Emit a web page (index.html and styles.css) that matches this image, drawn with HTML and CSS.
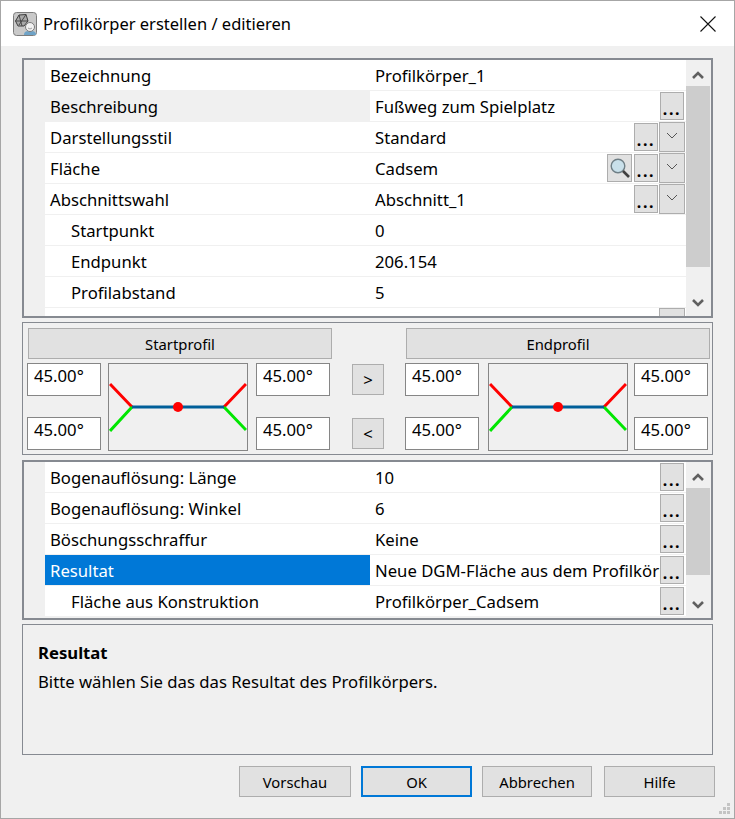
FILE: index.html
```html
<!DOCTYPE html>
<html lang="de">
<head>
<meta charset="utf-8">
<title>Profilkörper erstellen / editieren</title>
<link rel="stylesheet" href="styles.css">
</head>
<body>
<div class="window">
  <header class="titlebar">
    <svg class="app-icon" width="24" height="24" viewBox="0 0 24 24">
      <rect x="0.5" y="0.5" width="23" height="23" rx="3" fill="#c9c9c9" stroke="#7c7c7c"/>
      <path d="M2.5 9 L6 3 L13 2.5 L15 9 L11 14 L5 14 Z" fill="#a9a9a9" stroke="#3f3f3f" stroke-width="1"/>
      <path d="M2.5 9 L15 9 M6 3 L9 14 M13 2.5 L6 13" stroke="#3f3f3f" stroke-width="0.9" fill="none"/>
      <path d="M11 23 C11 19.500 13 19 17 19 C21 19 23 19.500 23 23 Z" fill="#6fa3c7"/>
      <circle cx="17" cy="15" r="4.500" fill="#f2f2f2" stroke="#7a7a7a"/>
      <path d="M15 16 Q17 18 19 16" stroke="#7a7a7a" fill="none" stroke-width="0.7"/>
    </svg>
    <span class="title">Profilkörper erstellen / editieren</span>
    <svg class="close" width="16" height="16" viewBox="0 0 16 16"><path d="M0.5 0.5 L15.5 15.5 M15.5 0.5 L0.5 15.5" stroke="#111" stroke-width="1.1" fill="none"/></svg>
  </header>
  <main class="content">
    <section class="grid-panel grid-top">
      <div class="rows">
        <div class="row"><div class="name">Bezeichnung</div><div class="value"><span class="val-text">Profilkörper_1</span></div></div>
        <div class="row row-soft"><div class="name">Beschreibung</div><div class="value"><span class="val-text">Fußweg zum Spielplatz</span><span class="mini dots">...</span></div></div>
        <div class="row"><div class="name">Darstellungsstil</div><div class="value has-drop"><span class="val-text">Standard</span><span class="mini dots">...</span><span class="mini drop"><svg width="12" height="7" viewBox="0 0 12 7"><path d="M1 1 L6 6 L11 1" fill="none" stroke="#555"/></svg></span></div></div>
        <div class="row"><div class="name">Fläche</div><div class="value has-drop"><span class="val-text">Cadsem</span><span class="mini search"><svg width="22" height="22" viewBox="0 0 22 22"><circle cx="9" cy="9" r="6.8" fill="#c9e0ea" stroke="#6f7f86" stroke-width="1.4"/><path d="M14 14 L20 20" stroke="#3f3f3f" stroke-width="2.6"/></svg></span><span class="mini dots">...</span><span class="mini drop"><svg width="12" height="7" viewBox="0 0 12 7"><path d="M1 1 L6 6 L11 1" fill="none" stroke="#555"/></svg></span></div></div>
        <div class="row"><div class="name">Abschnittswahl</div><div class="value has-drop"><span class="val-text">Abschnitt_1</span><span class="mini dots">...</span><span class="mini drop"><svg width="12" height="7" viewBox="0 0 12 7"><path d="M1 1 L6 6 L11 1" fill="none" stroke="#555"/></svg></span></div></div>
        <div class="row"><div class="name sub">Startpunkt</div><div class="value"><span class="val-text">0</span></div></div>
        <div class="row"><div class="name sub">Endpunkt</div><div class="value"><span class="val-text">206.154</span></div></div>
        <div class="row"><div class="name sub">Profilabstand</div><div class="value"><span class="val-text">5</span></div></div>
        <div class="row"><div class="name"></div><div class="value has-drop"><span class="val-text"></span><span class="mini drop"></span></div></div>
      </div>
      <div class="scrollbar">
        <div class="arrow arrow-up"><svg width="12" height="10" viewBox="0 0 12 10"><path d="M1 8 L6 3 L11 8" fill="none" stroke="#606060" stroke-width="2.6"/></svg></div>
        <div class="thumb thumb-top"></div>
        <div class="track"></div>
        <div class="arrow"><svg width="12" height="10" viewBox="0 0 12 10"><path d="M1 2 L6 7 L11 2" fill="none" stroke="#606060" stroke-width="2.6"/></svg></div>
      </div>
    </section>

    <section class="profiles">
      <div class="profile">
        <button class="btn head">Startprofil</button>
        <div class="profile-body">
          <div class="angles"><div class="angle">45.00°</div><div class="angle">45.00°</div></div>
          <div class="preview">
            <svg width="138" height="86" viewBox="0 0 138 86">
              <path d="M1 20 L23 43 M137 20 L115 43" stroke="#ff0000" stroke-width="3" fill="none"/>
              <path d="M1 67 L23 43 M137 66 L115 43" stroke="#00e600" stroke-width="3" fill="none"/>
              <path d="M23 43 L115 43" stroke="#005f99" stroke-width="3" fill="none"/>
              <circle cx="69" cy="43" r="5" fill="#ff0000"/>
            </svg>
          </div>
          <div class="angles"><div class="angle">45.00°</div><div class="angle">45.00°</div></div>
        </div>
      </div>
      <div class="transfer">
        <button class="btn move">&gt;</button>
        <button class="btn move">&lt;</button>
      </div>
      <div class="profile profile-end">
        <button class="btn head">Endprofil</button>
        <div class="profile-body">
          <div class="angles"><div class="angle">45.00°</div><div class="angle">45.00°</div></div>
          <div class="preview">
            <svg width="138" height="86" viewBox="0 0 138 86">
              <path d="M1 20 L23 43 M137 20 L115 43" stroke="#ff0000" stroke-width="3" fill="none"/>
              <path d="M1 67 L23 43 M137 66 L115 43" stroke="#00e600" stroke-width="3" fill="none"/>
              <path d="M23 43 L115 43" stroke="#005f99" stroke-width="3" fill="none"/>
              <circle cx="69" cy="43" r="5" fill="#ff0000"/>
            </svg>
          </div>
          <div class="angles"><div class="angle">45.00°</div><div class="angle">45.00°</div></div>
        </div>
      </div>
    </section>

    <section class="grid-panel grid-bottom">
      <div class="rows">
        <div class="row"><div class="name">Bogenauflösung: Länge</div><div class="value"><span class="val-text">10</span><span class="mini dots">...</span></div></div>
        <div class="row"><div class="name">Bogenauflösung: Winkel</div><div class="value"><span class="val-text">6</span><span class="mini dots">...</span></div></div>
        <div class="row"><div class="name">Böschungsschraffur</div><div class="value"><span class="val-text">Keine</span><span class="mini dots">...</span></div></div>
        <div class="row row-selected"><div class="name">Resultat</div><div class="value"><span class="val-text">Neue DGM-Fläche aus dem Profilkörper</span><span class="mini dots">...</span></div></div>
        <div class="row"><div class="name sub">Fläche aus Konstruktion</div><div class="value"><span class="val-text">Profilkörper_Cadsem</span><span class="mini dots">...</span></div></div>
      </div>
      <div class="scrollbar">
        <div class="arrow arrow-up"><svg width="12" height="10" viewBox="0 0 12 10"><path d="M1 8 L6 3 L11 8" fill="none" stroke="#606060" stroke-width="2.6"/></svg></div>
        <div class="thumb thumb-bottom"></div>
        <div class="track"></div>
        <div class="arrow"><svg width="12" height="10" viewBox="0 0 12 10"><path d="M1 2 L6 7 L11 2" fill="none" stroke="#606060" stroke-width="2.6"/></svg></div>
      </div>
    </section>

    <section class="help">
      <div class="help-title">Resultat</div>
      <div class="help-text">Bitte wählen Sie das das Resultat des Profilkörpers.</div>
    </section>

    <footer class="footer">
      <button class="btn action w-preview">Vorschau</button>
      <button class="btn action w-ok primary">OK</button>
      <button class="btn action w-cancel">Abbrechen</button>
      <button class="btn action w-help">Hilfe</button>
    </footer>
  </main>
  <svg class="grip" width="12" height="12" viewBox="0 0 12 12"><path d="M8 0h3v3H8zM4 4h3v3H4zM8 4h3v3H8zM0 8h3v3H0zM4 8h3v3H4zM8 8h3v3H8z" fill="#c4c4c4"/></svg>
</div>
</body>
</html>
```
FILE: styles.css
```css
* { box-sizing: border-box; }
html, body { margin: 0; padding: 0; }
body { font-family: "Noto Sans", "Open Sans", sans-serif; font-size: 16.7px; color: #000; background: #f0f0f0; }

.window { position: relative; width: 735px; height: 819px; border: 1px solid #a6a6a6; background: #f0f0f0; display: flex; flex-direction: column; overflow: hidden; }

.titlebar { height: 45px; flex: none; background: #fff; display: flex; align-items: center; padding: 0 18px 0 12px; }
.app-icon { flex: none; margin-right: 6px; }
.title { flex: 1; font-size: 16.5px; }
.close { flex: none; }

.content { flex: 1; padding: 12px 21px 0; display: flex; flex-direction: column; }

.grid-panel { display: flex; border: 2px solid #868a91; padding-right: 1px; background: #f0f0f0; overflow: hidden; flex: none; }
.grid-top { height: 260px; }
.grid-bottom { height: 160px; margin-top: 5px; }
.rows { flex: 1; min-width: 0; padding-left: 21px; overflow: hidden; }

.row { display: flex; height: 31px; background: #fff; border-bottom: 1px solid #f0f0f0; }
.name { flex: none; width: 325px; height: 30px; padding-left: 5px; line-height: 31px; white-space: nowrap; }
.name.sub { padding-left: 26px; }
.row-soft .name { background: #f0f0f0; }
.row-selected .name { background: #0078d7; color: #fff; }

.value { flex: 1; min-width: 0; display: flex; height: 30px; padding-left: 5px; padding-right: 2px; align-items: flex-start; line-height: 31px; }
.value.has-drop { padding-right: 1px; }
.val-text { flex: 1; min-width: 0; overflow: hidden; white-space: nowrap; }

.mini { flex: none; display: flex; justify-content: center; background: #e1e1e1; border: 1px solid #adadad; }
.dots { width: 24px; height: 28px; margin-top: 1px; font-weight: 700; font-size: 16px; line-height: 20px; letter-spacing: 1.6px; align-items: flex-end; overflow: hidden; }
.drop { width: 26px; height: 30px; margin-left: 1px; align-items: center; padding-bottom: 4px; }
.search { width: 25px; height: 28px; margin-top: 1px; margin-right: 2px; align-items: center; }

.scrollbar { flex: none; width: 24px; display: flex; flex-direction: column; background: #f0f0f0; }
.arrow { flex: none; height: 26px; display: flex; align-items: center; justify-content: center; }
.arrow-up { padding-top: 3px; }
.thumb { flex: none; background: #cdcdcd; }
.thumb-top { height: 181px; }
.thumb-bottom { height: 87px; }
.track { flex: 1; }

.profiles { flex: none; height: 133px; margin-top: 4px; border: 1px solid #868a91; padding: 5px 0 0 4px; display: flex; }
.profile { flex: none; width: 306px; }
.btn { font-family: inherit; font-size: 14.8px; color: #000; background: #e1e1e1; border: 1px solid #adadad; padding: 0; border-radius: 0; }
.head { display: block; width: 304px; height: 31px; margin-left: 1px; }
.profile-body { display: flex; margin-top: 4px; }
.angles { flex: none; height: 87px; display: flex; flex-direction: column; justify-content: space-between; }
.angle { width: 74px; height: 33px; background: #fff; border: 1px solid #868686; padding-left: 6px; line-height: 24px; }
.preview { flex: none; width: 140px; height: 88px; margin: 0 8px 0 7px; border: 1px solid #868686; }
.profile-end .preview { margin: 0 6px 0 9px; }
.preview svg { display: block; }
.transfer { flex: none; width: 32px; margin: 36px 21px 0 19px; display: flex; flex-direction: column; gap: 23px; }
.move { width: 32px; height: 31px; font-size: 16.7px; }

.help { flex: none; height: 131px; margin-top: 4px; border: 1px solid #868a91; padding: 16px 0 0 15px; }
.help-title { font-weight: 700; line-height: 24px; }
.help-text { margin-top: 5px; line-height: 24px; }

.footer { flex: none; margin: 11px -2px 0 0; display: flex; gap: 10px; padding-left: 217px; }
.action { flex: none; height: 31px; }
.w-preview { width: 112px; }
.w-ok { width: 111px; }
.w-cancel { width: 110px; }
.w-help { width: 111px; margin-left: 2px; }
.primary { border: 2px solid #0078d7; }

.grip { position: absolute; right: 3px; bottom: 3px; }
```
